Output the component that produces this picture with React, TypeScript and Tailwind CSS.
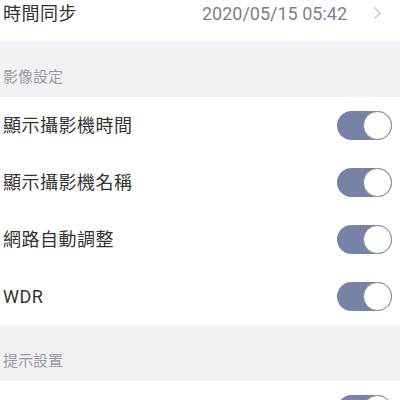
import React from 'react';

const font = { fontFamily: 'Roboto, "Noto Sans CJK TC", sans-serif' };

function Toggle() {
  return (
    <div className="flex h-[29px] w-[55px] items-center justify-end rounded-full bg-[#7683a6]">
      <div className="h-[29px] w-[29px] rounded-full border border-[#8a8f9c] bg-white" />
    </div>
  );
}

function SwitchRow({ label }: { label: string }) {
  return (
    <div className="flex h-[57px] items-center justify-between bg-white pl-[3px] pr-[8px]">
      <span className="text-[18px] tracking-[0.5px] text-[#333333]">{label}</span>
      <Toggle />
    </div>
  );
}

function SectionHeader({ title }: { title: string }) {
  return (
    <div className="flex h-[56px] items-center bg-[#f1f1f6] pl-[3px] pt-[16px]">
      <span className="text-[15px] text-[#9a9a9e]">{title}</span>
    </div>
  );
}

export default function App() {
  return (
    <div className="h-[400px] w-[400px] overflow-hidden bg-white" style={font}>
      <div className="-mt-[15px] flex h-[56px] items-center justify-between bg-white pl-[3px] pr-[18px]">
        <span className="text-[18px] tracking-[0.5px] text-[#333333]">時間同步</span>
        <div className="flex items-center gap-[26px]">
          <span className="text-[18px] text-[#7b8091]">2020/05/15 05:42</span>
          <svg width="9" height="14" viewBox="0 0 9 14" fill="none">
            <path d="M1.5 1.5 L7 7 L1.5 12.5" stroke="#c4c4c8" strokeWidth="1.4" />
          </svg>
        </div>
      </div>
      <SectionHeader title="影像設定" />
      <SwitchRow label="顯示攝影機時間" />
      <SwitchRow label="顯示攝影機名稱" />
      <SwitchRow label="網路自動調整" />
      <SwitchRow label="WDR" />
      <SectionHeader title="提示設置" />
      <SwitchRow label="移動偵測" />
    </div>
  );
}
